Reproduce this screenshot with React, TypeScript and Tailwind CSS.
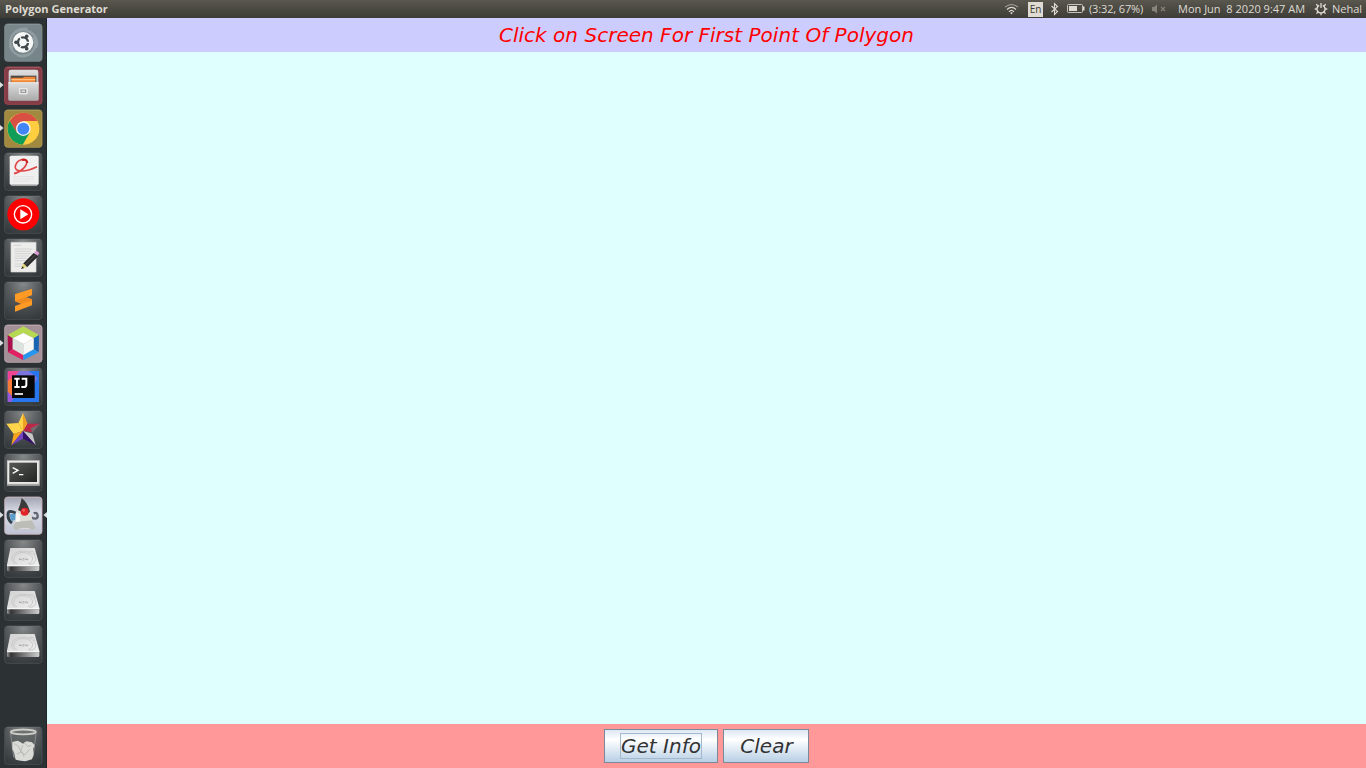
import type { ReactNode } from "react";

type TileProps = { name: string; fill?: string; edge?: string; running?: boolean; active?: boolean; children: ReactNode };

function Tile({ name, fill = "url(#tileGlass)", edge = "#4b5153", running, active, children }: TileProps) {
  return (
    <div className="relative h-[39px] w-full shrink-0 pl-1" aria-label={name}>
      <svg width="39" height="39" viewBox="0 0 117 117" className="block">
        <rect x="2" y="3" width="112" height="112" rx="9" fill={fill} stroke={edge} strokeWidth="2.5" />
        <path d="M9 4H108" stroke="#fff" strokeOpacity=".12" strokeWidth="3" />
        {children}
      </svg>
      {running && (
        <svg className="absolute left-0 top-[15px]" width="4" height="8" viewBox="0 0 4 8">
          <path d="M0 1 3.6 4 0 7Z" fill="#dde0e0" />
        </svg>
      )}
      {active && (
        <svg className="absolute right-0 top-[15px]" width="4" height="8" viewBox="0 0 4 8">
          <path d="M4 1 .4 4 4 7Z" fill="#dde0e0" />
        </svg>
      )}
    </div>
  );
}

function Defs() {
  return (
    <svg width="0" height="0" className="absolute">
      <defs>
        <radialGradient id="tileGlass" cx=".5" cy=".05" r="1">
          <stop offset="0" stopColor="#858989" />
          <stop offset=".45" stopColor="#54585a" />
          <stop offset="1" stopColor="#34393b" />
        </radialGradient>
        <linearGradient id="dash" x1="0" y1="0" x2="1" y2="1">
          <stop offset="0" stopColor="#7b878b" />
          <stop offset="1" stopColor="#75858a" />
        </linearGradient>
        <linearGradient id="metal" x1="0" y1="0" x2="0" y2="1">
          <stop offset="0" stopColor="#dedede" />
          <stop offset="1" stopColor="#a9a9a9" />
        </linearGradient>
        <linearGradient id="driveTop" x1="0" y1="0" x2="1" y2="1">
          <stop offset="0" stopColor="#d2d2d2" />
          <stop offset="1" stopColor="#efefef" />
        </linearGradient>
        <linearGradient id="driveEdge" x1="0" y1="0" x2="1" y2="0">
          <stop offset="0" stopColor="#999" />
          <stop offset=".12" stopColor="#333" />
          <stop offset=".4" stopColor="#666" />
          <stop offset="1" stopColor="#d0d0d0" />
        </linearGradient>
        <linearGradient id="term" x1="0" y1="0" x2="1" y2="1">
          <stop offset="0" stopColor="#555855" />
          <stop offset="1" stopColor="#222522" />
        </linearGradient>
        <linearGradient id="duke" x1="0" y1="0" x2="0" y2="1">
          <stop offset="0" stopColor="#a1a3b0" />
          <stop offset=".4" stopColor="#d9dce7" />
          <stop offset="1" stopColor="#bfc3d2" />
        </linearGradient>
      </defs>
    </svg>
  );
}

function Drive({ name }: { name: string }) {
  return (
    <Tile name={name}>
      <path d="M19 27H92L106 77V81H9V77Z" fill="url(#driveTop)" />
      <path d="M9 82H106V92Q106 96 102 96H13Q9 96 9 92Z" fill="url(#driveEdge)" />
      <path d="M9 80H106" stroke="#f5f5f5" strokeWidth="4" />
      <path d="M33 76C16 66 22 43 45 38C62 34 87 39 94 54C98 64 92 76 76 76M75 39Q90 32 93 48M39 74Q24 68 32 52Q40 39 60 41Q83 43 86 58Q86 70 72 74" fill="none" stroke="#c3c3c3" strokeWidth="2.5" />
      <path d="M46 63V59L52 63V59M56 59H61M56 63H61M65 63V59L71 63V59" fill="none" stroke="#a3a3a3" strokeWidth="2.5" />
    </Tile>
  );
}

function Launcher() {
  return (
    <nav className="flex w-[47px] shrink-0 flex-col bg-[#2c3134] pt-[5px] shadow-[inset_-1px_0_0_#202527]">
      <div className="flex flex-1 flex-col gap-1">
        <Tile name="Search" fill="url(#dash)" edge="#7c898d">
          <path d="M25 77C7 45 35 12 70 18M35 28C74 8 111 43 96 75M89 41C106 78 76 108 41 98M79 91C46 110 15 88 19 56" fill="none" stroke="#aab4b7" strokeWidth="7" opacity=".5" />
          <circle cx="57" cy="58" r="31" fill="#f6f7f7" />
          <circle cx="57" cy="58" r="15" fill="none" stroke="#3f474a" strokeWidth="7" />
          <path d="M57 58 45 38M57 58 45 78M57 58H80" stroke="#f6f7f7" strokeWidth="4" />
          <g fill="#3f474a"><circle cx="36" cy="58" r="5.5" /><circle cx="68" cy="40" r="5.5" /><circle cx="68" cy="77" r="5.5" /></g>
        </Tile>
        <Tile name="Files" fill="#843c47" edge="#a94855" running>
          <path d="M14 18Q14 11 21 11H96Q103 11 103 18V103H14Z" fill="url(#metal)" />
          <path d="M20 29H97V50H20Z" fill="#4c4743" />
          <path d="M22 35H56L60 32H94V50H22Z" fill="#ee8435" />
          <path d="M22 41H94" stroke="#ffc17f" strokeWidth="4" />
          <path d="M13 50H104V99Q104 104 99 104H18Q13 104 13 99Z" fill="url(#metal)" />
          <path d="M13 50H104" stroke="#eee" strokeWidth="3" />
          <rect x="46" y="67" width="24" height="17" rx="2" fill="#e4e4e4" stroke="#f2f2f2" strokeWidth="2" />
          <rect x="51" y="72" width="14" height="7" fill="#f7f7f7" stroke="#888" strokeWidth="3" />
        </Tile>
        <Tile name="Chrome" fill="#a18a3f" edge="#ad9953" running>
          <circle cx="58" cy="59" r="48" fill="#ffcd40" />
          <path d="M17 35A48 48 0 0 1 100 36H58L38 70Z" fill="#d94f43" />
          <path d="M17 35A48 48 0 0 0 56 107L78 70Q55 85 38 70Z" fill="#0f9d58" />
          <circle cx="58" cy="59" r="22" fill="#f5f5f5" /><circle cx="58" cy="59" r="18" fill="#4285f4" />
        </Tile>
        <Tile name="Document Viewer">
          <path d="M17 16Q17 11 22 11H99Q104 11 104 16V94Q104 99 99 99H22Q17 99 17 94Z" fill="#f0f0f0" />
          <path d="M20 96H102L99 101H22Z" fill="#c4c4c4" />
          <path d="M30 65C53 60 70 40 68 29C65 16 39 22 34 42C30 60 60 63 99 44" fill="none" stroke="#e04646" strokeWidth="5" />
          <path d="M54 24Q69 20 70 33" fill="none" stroke="#cb2020" strokeWidth="6" />
          <path d="M28 74H90M28 81H93M28 88H75" stroke="#ddd" strokeWidth="2" />
        </Tile>
        <Tile name="YouTube Music">
          <circle cx="58" cy="58" r="48" fill="#f00" />
          <circle cx="57" cy="58" r="26" fill="none" stroke="#fff" strokeWidth="4" />
          <path d="m49 43 24 15-24 15Z" fill="#fff" />
        </Tile>
        <Tile name="Text Editor">
          <path d="M21 13H96V102H21Z" fill="#ececeb" stroke="#d5d5d5" strokeWidth="2" />
          <path d="M29 22H51M32 33H85M32 40H80M32 47H85M32 54H76M32 61H69M32 68H74M32 78H60M32 85H54" stroke="#cfcfcf" strokeWidth="2.5" />
          <path d="m57 77 32-32 14 9-34 34Z" fill="#292929" /><path d="m64 81 31-31" stroke="#777" strokeWidth="2" />
          <path d="m58 76 11 11-18 5Z" fill="#e6d879" /><path d="m51 92 6-7 2 6Z" fill="#111" />
          <path d="m90 43 8-5 8 7-5 8Z" fill="#dd9bd0" />
        </Tile>
        <Tile name="Sublime Text">
          <path d="M33 40 84 24V42L65 49 84 55V73L33 92V75L52 68 33 61Z" fill="#ff9b25" />
          <path d="M33 43 65 49 84 55V60L52 68 33 60Z" fill="#f08b1f" />
          <path d="M33 40 84 24V42L33 59Z" fill="#ff9b25" />
        </Tile>
        <Tile name="NetBeans" fill="#a49198" edge="#bba7ae" running>
          <path d="m58 7 47 26-16 10-31-16-32 16-15-10Z" fill="#b7d952" />
          <path d="m11 33 15 10V75L12 85Z" fill="#aa104c" />
          <path d="m26 75 32 18v16L12 85Z" fill="#e12164" />
          <path d="m105 33-16 10v33l15 9Z" fill="#1763b4" /><path d="m89 76-31 17v16l46-24Z" fill="#2696ee" />
          <path d="m58 27 31 16-31 17-32-17Z" fill="#fff" /><path d="M26 43 58 60V93L26 75Z" fill="#dce2dd" /><path d="m89 43-31 17v33l31-17Z" fill="#f5f8f5" />
        </Tile>
        <Tile name="IntelliJ IDEA">
          <path d="M11 12H105V105H11Z" fill="#2876ee" />
          <path d="M11 12H52L24 42 11 46Z" fill="#f04494" /><path d="M46 12H74L100 32 92 50 60 26H33Z" fill="#7b74df" />
          <path d="M11 42 24 34V91L11 75Z" fill="#f77a38" /><path d="M11 74 30 92 21 105H11Z" fill="#9759d8" />
          <path d="M24 25H92V93H24Z" fill="#080808" />
          <path d="M31 35H47M39 35V59M31 60H47M53 35H67V53Q67 60 59 60H52" fill="none" stroke="#fff" strokeWidth="6" />
          <path d="M32 81H57" stroke="#fff" strokeWidth="5" />
        </Tile>
        <Tile name="StarUML">
          <path d="m57 10 13 31-13 22-14-24Z" fill="#ffd548" /><path d="M7 41 43 39 57 63 29 72Z" fill="#fed54a" /><path d="m29 72 28-9L22 106Z" fill="#f6a51c" />
          <path d="m57 63 13-22 37 0-22 26Z" fill="#bc2747" /><path d="m57 63 28 8 10 35Z" fill="#c6c6c6" /><path d="M85 70 107 41 80 55Z" fill="#77676f" />
          <path d="M57 63V86L22 106Z" fill="#7543c2" /><path d="m57 63 38 43-38-20Z" fill="#351269" />
          <path d="M57 10V63L70 41Z" fill="#ef9f22" />
        </Tile>
        <Tile name="Terminal">
          <path d="M9 22H107V98H9Z" fill="#c7c7c4" /><path d="M12 24H104V92H12Z" fill="#e9e9e7" /><path d="M16 29H99V87H16Z" fill="url(#term)" />
          <path d="m26 44 16 8-16 9M45 65H58" fill="none" stroke="#fff" strokeWidth="4" />
          <path d="M9 96H107" stroke="#888" strokeWidth="3" />
        </Tile>
        <Tile name="Polygon Generator" fill="url(#duke)" edge="#c7afb8" running active>
          <path d="M35 51Q12 40 12 56Q12 72 24 81" fill="none" stroke="#35414a" strokeWidth="9" />
          <path d="m17 55 18-2v19l-14 3Z" fill="#5c9dc9" />
          <path d="M82 65Q102 73 101 59 99 47 89 52" fill="none" stroke="#606571" strokeWidth="7" />
          <path d="M54 7Q75 25 84 67L86 98H33L36 51Z" fill="#deded9" />
          <path d="M53 6Q70 18 78 47L68 56 42 42Q49 26 53 6Z" fill="#3b3b3b" />
          <path d="M37 48Q32 75 38 94L48 75V55Z" fill="#f8f8f5" />
          <path d="M35 78 27 94 35 103 51 96 74 96 86 103 95 96 84 73" fill="#bdbdb8" />
          <circle cx="62" cy="47" r="12" fill="#df2527" /><circle cx="59" cy="43" r="4" fill="#ef625d" />
        </Tile>
        <Drive name="Volume 1" />
        <Drive name="Volume 2" />
        <Drive name="Volume 3" />
      </div>
      <div className="pb-[3px]">
        <Tile name="Trash">
          <path d="m20 24 9 69q28 15 58 0l9-69Z" fill="#5d6262" fillOpacity=".65" stroke="#858989" strokeWidth="3" />
          <ellipse cx="58" cy="18" rx="38" ry="7" fill="#6d7170" stroke="#cfd0cb" strokeWidth="5" />
          <path d="m25 48 16-4 9 5 7 4 10-7 17 3 8 9-5 11 2 14-5 17-20 6-14-2-15-3-5-22-5-10Z" fill="#dadad6" />
          <path d="m31 53 12 7 8 18-12 6M61 49l9 12 12-3M49 77l14 9 14-16M56 58l-5 14 9 20" fill="none" stroke="#b9bab6" strokeWidth="3" />
        </Tile>
      </div>
    </nav>
  );
}

function TopBar() {
  return (
    <header className="flex h-[18px] shrink-0 items-center bg-linear-to-b from-[#59574e] to-[#3d3c37] pl-[5px] font-['Open_Sans',sans-serif] text-[11px] leading-[18px] text-[#dfdbd2]">
      <span className="w-[999px] shrink-0 whitespace-nowrap font-bold">Polygon Generator</span>
      <svg width="16" height="14" viewBox="0 0 16 14" className="shrink-0" fill="none" stroke="#dfdbd2" strokeWidth="1.1">
        <path d="M1 5.1Q7.5-.2 14 5.1" opacity=".6" /><path d="M3 7.5Q7.5 3.2 12 7.5" /><path d="M5 9.8Q7.5 7 10 9.8" /><path d="m6.2 11 1.3-1 1.3 1-1.3 1.3Z" fill="#dfdbd2" stroke="none" />
      </svg>
      <span className="ml-2 h-[15px] w-[15px] shrink-0 bg-[#dfdbd2] text-center text-[10px] leading-[15px] text-[#3c3b37]">En</span>
      <svg width="9" height="14" viewBox="0 0 9 14" className="ml-[7px] shrink-0" fill="none" stroke="#dfdbd2" strokeWidth="1.1"><path d="m1.5 4 6 5.5-3 3V1.5l3 3-6 5.5" /></svg>
      <svg width="20" height="12" viewBox="0 0 20 12" className="ml-[7px] shrink-0"><rect x="1.5" y="1.5" width="15" height="8" rx="1" fill="none" stroke="#c6c2b9" /><path d="M3 3H11V8H3ZM17 3.5h1.5v4H17Z" fill="#dfdbd2" /></svg>
      <span className="ml-[3px] w-[57px] shrink-0 whitespace-nowrap tracking-[-0.13px]">(3:32, 67%)</span>
      <svg width="16" height="12" viewBox="0 0 16 12" className="ml-[5px] shrink-0"><path d="M1 4H3L6 1.5V10.5L3 8H1Z" fill="#85827a" /><path d="m10 4 4 4m0-4-4 4" stroke="#85827a" strokeWidth="1.2" /></svg>
      <span className="ml-[11px] w-[128px] shrink-0 whitespace-pre tracking-[0.01px]">Mon Jun  8 2020 9:47 AM</span>
      <svg width="14" height="14" viewBox="0 0 14 14" className="ml-[8px] shrink-0" fill="none" stroke="#dfdbd2">
        <path d="M5.2 3.3A4.1 4.1 0 1 0 8.8 3.3" strokeWidth="1.5" /><path d="M7 1v5M2.2 2.2l1.6 1.6M11.8 2.2l-1.6 1.6M.7 7h2M11.3 7h2M2.4 11.6 4 10M11.6 11.6 10 10M7 11.2v2" strokeWidth="1.3" />
      </svg>
      <span className="ml-[4px] whitespace-nowrap">Nehal</span>
    </header>
  );
}

export default function App() {
  return (
    <div className="flex h-screen w-screen flex-col overflow-hidden">
      <Defs />
      <TopBar />
      <div className="flex min-h-0 flex-1">
        <Launcher />
        <main className="flex flex-1 flex-col font-['DejaVu_Sans',sans-serif] text-[20px] italic">
          <div className="flex h-[34px] shrink-0 items-center justify-center bg-[#ccccff] whitespace-nowrap tracking-[0.02px] text-[#ff0000]">Click on Screen For First Point Of Polygon</div>
          <div className="flex-1 bg-[#dfffff]" />
          <div className="flex h-11 shrink-0 items-center justify-center gap-[5px] bg-[#ff9999] text-[#333]">
            <button className="flex h-[34px] w-[114px] items-center justify-center border border-[#7a8a99] bg-linear-to-b from-[#dde8f3] via-white via-30% to-[#b8cfe5]">
              <span className="flex h-[26px] w-[82px] items-center justify-center border border-[#a3b8cc] whitespace-nowrap">Get Info</span>
            </button>
            <button className="flex h-[34px] w-[86px] items-center justify-center border border-[#7a8a99] bg-linear-to-b from-[#dde8f3] via-white via-30% to-[#b8cfe5] pl-px">Clear</button>
          </div>
        </main>
      </div>
    </div>
  );
}
